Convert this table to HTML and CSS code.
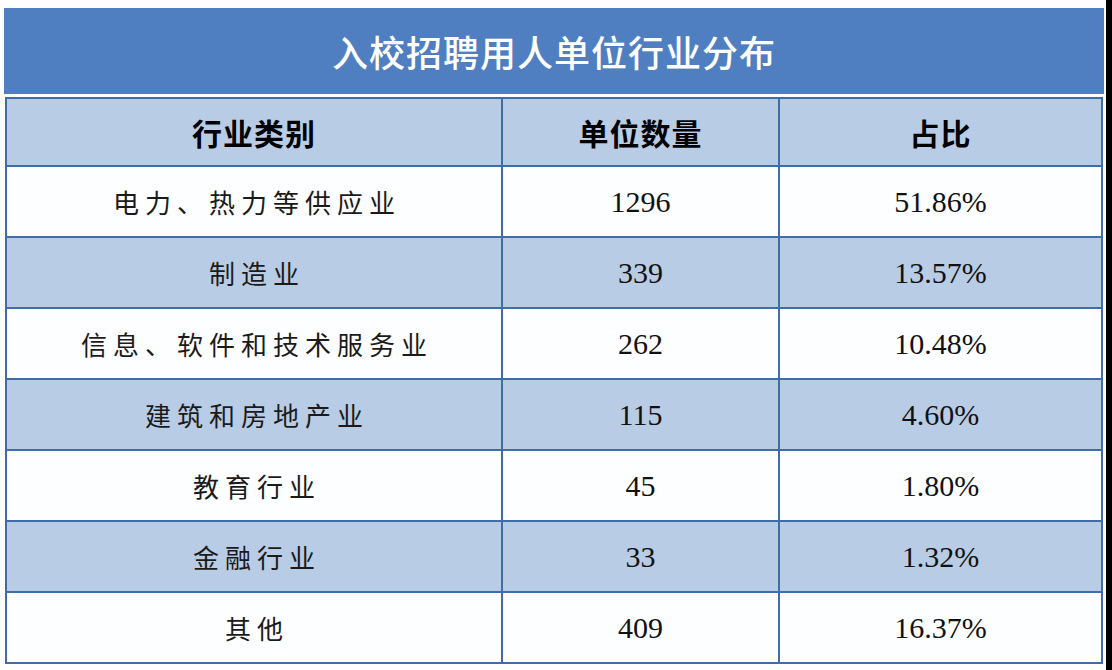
FILE: index.html
```html
<!DOCTYPE html>
<html lang="zh-CN">
<head>
<meta charset="utf-8">
<title>入校招聘用人单位行业分布</title>
<link rel="stylesheet" href="styles.css">
</head>
<body>
<div class="page">
  <div class="title">入校招聘用人单位行业分布</div>
  <div class="grid">
    <div class="cell head cjk-b">行业类别</div>
    <div class="cell head cjk-b">单位数量</div>
    <div class="cell head cjk-b">占比</div>

    <div class="cell cjk">电力、热力等供应业</div>
    <div class="cell num">1296</div>
    <div class="cell num">51.86%</div>

    <div class="cell alt cjk">制造业</div>
    <div class="cell alt num">339</div>
    <div class="cell alt num">13.57%</div>

    <div class="cell cjk">信息、软件和技术服务业</div>
    <div class="cell num">262</div>
    <div class="cell num">10.48%</div>

    <div class="cell alt cjk">建筑和房地产业</div>
    <div class="cell alt num">115</div>
    <div class="cell alt num">4.60%</div>

    <div class="cell cjk">教育行业</div>
    <div class="cell num">45</div>
    <div class="cell num">1.80%</div>

    <div class="cell alt cjk">金融行业</div>
    <div class="cell alt num">33</div>
    <div class="cell alt num">1.32%</div>

    <div class="cell cjk">其他</div>
    <div class="cell num">409</div>
    <div class="cell num">16.37%</div>
  </div>
</div>
</body>
</html>
```

FILE: styles.css
```css
html {
  background: #000;
}
body {
  margin: 0;
  width: 1106px;
  height: 670px;
  background: #fefefe;
  overflow: hidden;
}
.page {
  padding: 8px 0 0 4px;
}
.title {
  width: 1100px;
  height: 86px;
  background: #4f7fc0;
  color: #fff;
  font-family: "Noto Sans CJK SC", sans-serif;
  font-weight: 500;
  font-size: 36px;
  letter-spacing: 1px;
  display: flex;
  align-items: center;
  justify-content: center;
  box-sizing: border-box;
}
.grid {
  margin: 3px 0 0 1px;
  width: 1098px;
  box-sizing: border-box;
  padding: 2px;
  gap: 2px;
  background: #3f6daa;
  display: grid;
  grid-template-columns: 494px 275px 321px;
  grid-template-rows: 66px repeat(7, 69px);
}
.cell {
  background: #fdfeff;
  display: flex;
  align-items: center;
  justify-content: center;
  color: #1a1a1a;
}
.cell.head,
.cell.alt {
  background: #b9cce5;
}
.cjk-b {
  font-family: "Noto Sans CJK SC", sans-serif;
  font-weight: 700;
  font-size: 30px;
  letter-spacing: 1px;
  color: #000;
}
.cjk {
  font-family: "Noto Sans CJK SC", sans-serif;
  font-weight: 400;
  font-size: 26px;
  letter-spacing: 6px;
  padding-left: 6px;
}
.num {
  font-family: "Liberation Serif", "Times New Roman", serif;
  font-size: 30px;
  color: #111;
}
```
